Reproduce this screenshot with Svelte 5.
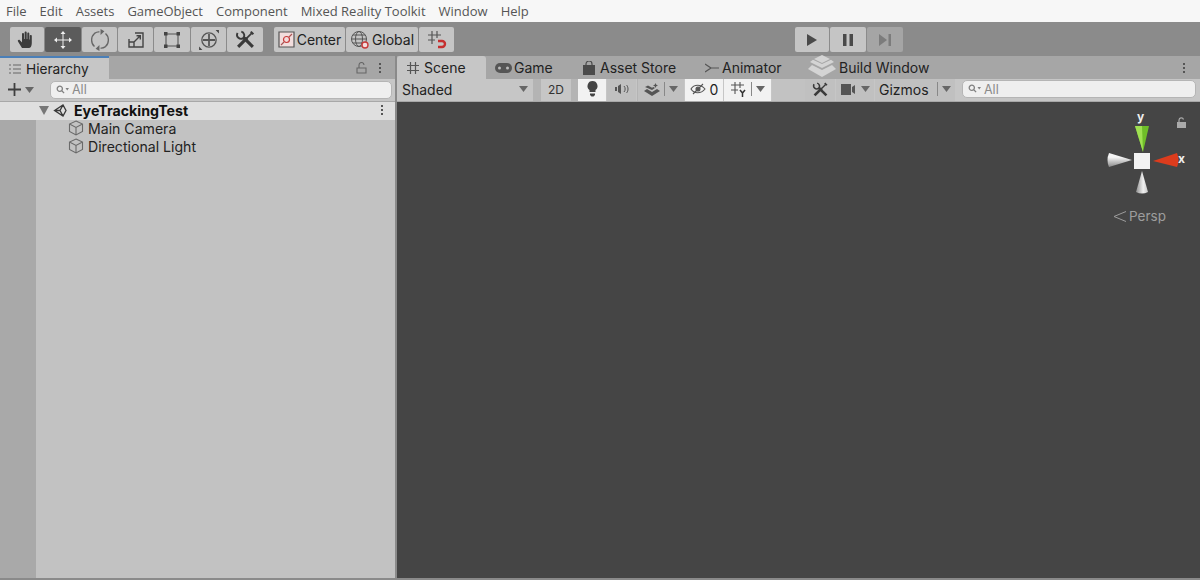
<script lang="ts">
  const menus = ["File", "Edit", "Assets", "GameObject", "Component", "Mixed Reality Toolkit", "Window", "Help"];
</script>

{#snippet caret()}
  <svg class="caret" width="9" height="6" viewBox="0 0 9 6"><path d="M0 0h9L4.500 6z" /></svg>
{/snippet}

{#snippet toolsIcon(size)}
  <svg width={size} height={size} viewBox="0 0 20 20" fill="none" stroke="#3a3a3a">
    <path d="M3 17l8.500-8.500" stroke-width="3" />
    <path d="M11 9l5-5" stroke-width="1.600" />
    <path d="M15 2.500l2.500 2.500" stroke-width="2" />
    <path d="M8 8l9 9" stroke-width="3" />
    <path d="M2.500 3.800a3.600 3.600 0 0 0 5.300 4.700 3.600 3.600 0 0 0-1.800-6" stroke-width="1.800" />
  </svg>
{/snippet}

{#snippet search(width)}
  <div class="search" style:width="{width}px">
    <svg width="13" height="10" viewBox="0 0 13 10" fill="none" stroke="#808080" stroke-width="1.300">
      <circle cx="3.800" cy="3.800" r="2.600" />
      <path d="M5.800 5.800l2.300 2.300" />
      <path d="M9.500 3H13L11.200 5.500z" fill="#808080" stroke="none" />
    </svg>
    <span>All</span>
  </div>
{/snippet}

<div class="screen">
  <nav class="menubar">
    {#each menus as item}
      <span>{item}</span>
    {/each}
  </nav>

  <div class="toolbar">
    <div class="group tools">
      <button class="tool" style="width:34px" aria-label="Hand">
        <svg width="22" height="22" viewBox="0 0 22 22" fill="#3c3c3c">
          <path d="M6 19 2 12.500c-.8-1.300 1-2.300 1.900-1.200L6 13.500V5c0-1.500 2-1.500 2 0v5h.6V3.500c0-1.500 2.100-1.500 2.100 0V10h.6V4.500c0-1.500 2-1.500 2 0V10.500h.5V7c0-1.400 2-1.400 2 0v7c0 3-1.200 5-3 5z" />
        </svg>
      </button>
      <button class="tool on" style="width:36px" aria-label="Move">
        <svg width="20" height="20" viewBox="0 0 20 20" fill="#eee" stroke="#eee" stroke-width="1">
          <path d="M10 4v12M4 10h12" />
          <path d="M10 1l2.500 3h-5zM10 19l2.500-3h-5zM1 10l3-2.500v5zM19 10l-3-2.500v5z" stroke="none" />
        </svg>
      </button>
      <button class="tool" style="width:35px" aria-label="Rotate">
        <svg width="22" height="22" viewBox="0 0 20 20" fill="none" stroke="#666" stroke-width="1.200">
          <path d="M5 16C1.500 13 1.500 7 5 4c1.500-1 3-1.500 4.500-1.300M15 4c3.500 3 3.500 9 0 12-1.500 1-3 1.500-4.500 1.300" />
          <path d="M10.500 0v5.500l3.500-3.500zM9.500 20v-5.500L6 18z" fill="#666" stroke="none" />
        </svg>
      </button>
      <button class="tool" style="width:35px" aria-label="Scale">
        <svg width="18" height="18" viewBox="0 0 18 18" fill="none" stroke="#444" stroke-width="1.400">
          <path d="M8 2h8v14H2V8" />
          <path d="M2 11h5v5M6.500 11.500 13 5M9.500 4.700H13.300V8.500" />
        </svg>
      </button>
      <button class="tool" style="width:36px" aria-label="Rect">
        <svg width="18" height="18" viewBox="0 0 18 18" fill="none" stroke="#555" stroke-width="1.100">
          <path d="M3 3h12v12H3z" />
          <path d="M1 1h3.500v3.500H1zM13.500 1H17v3.500h-3.500zM1 13.500h3.500V17H1zM13.500 13.500H17V17h-3.500z" fill="#444" stroke="none" />
        </svg>
      </button>
      <button class="tool" style="width:35px" aria-label="Transform">
        <svg width="22" height="22" viewBox="0 0 20 20" fill="none" stroke="#555" stroke-width="1.200">
          <circle cx="10" cy="10" r="6.500" />
          <path d="M10 4.500v11M4.500 10h11" stroke-width="1.600" />
          <path d="M16 1h3v3zM1 19v-3l3 3z" fill="#444" stroke="none" />
        </svg>
      </button>
      <button class="tool" style="width:36px" aria-label="Custom tools">{@render toolsIcon(21)}</button>
    </div>

    <div class="group pivot">
      <button class="tool text" style="width:71px">
        <svg width="17" height="17" viewBox="0 0 17 17" fill="#f2dddd" stroke="#555" stroke-width="1.200">
          <path d="M1 1h15v15H1z" />
          <circle cx="8.500" cy="8.500" r="3" fill="none" stroke="#c83a3a" />
          <path d="M3 14 6 11M11 6l3-3" stroke="#a55" fill="none" />
        </svg>
        Center
      </button>
      <button class="tool text" style="width:72px">
        <svg width="20" height="20" viewBox="0 0 20 20" fill="none" stroke="#555" stroke-width="1">
          <circle cx="9" cy="9" r="7.500" />
          <ellipse cx="9" cy="9" rx="3.500" ry="7.500" />
          <path d="M1.500 9h15M3 5h12M3 13h12" />
          <circle cx="15" cy="15" r="3" fill="#f4dcdc" stroke="#c83a3a" stroke-width="1.400" />
        </svg>
        Global
      </button>
      <button class="tool" style="width:35px" aria-label="Snap">
        <svg width="20" height="20" viewBox="0 0 20 20" fill="none" stroke="#555" stroke-width="1.200">
          <path d="M5 1v13M10 1v7M1 5h13M1 10h7" />
          <path d="M11 11h4a2.500 2.500 0 0 1 0 6h-4" stroke="#c62f2f" stroke-width="2.400" />
        </svg>
      </button>
    </div>

    <div class="group play">
      <button class="tool" style="width:34px" aria-label="Play">
        <svg width="12" height="12" viewBox="0 0 12 12" fill="#4a4a4a"><path d="M1 0l10 6-10 6z" /></svg>
      </button>
      <button class="tool" style="width:36px" aria-label="Pause">
        <svg width="10" height="12" viewBox="0 0 10 12" fill="#4a4a4a"><path d="M0 0h3.500v12H0zM6.500 0H10v12H6.500z" /></svg>
      </button>
      <button class="tool dim" style="width:36px" aria-label="Step">
        <svg width="12" height="12" viewBox="0 0 12 12" fill="#7c7c7c"><path d="M0 0l8 6-8 6zM9.500 0H12v12H9.500z" /></svg>
      </button>
    </div>
  </div>

  <div class="panes">
    <section class="hierarchy">
      <div class="tabs">
        <div class="tab active-blue">
          <svg width="12" height="10" viewBox="0 0 12 10" stroke="#666" stroke-width="1.200"><path d="M0 1h2M4 1h8M0 5h2M4 5h8M0 9h2M4 9h8" /></svg>
          Hierarchy
        </div>
        <div class="tab-actions">
          <svg width="11" height="12" viewBox="0 0 11 12" fill="none" stroke="#666" stroke-width="1.100"><path d="M1 6h9v5H1zM3 6V3a2.500 2.500 0 0 1 5 0" /></svg>
          <span class="dots"><i></i><i></i><i></i></span>
        </div>
      </div>
      <div class="search-row">
        <svg width="15" height="15" viewBox="0 0 15 15" stroke="#3f3f3f" stroke-width="1.800"><path d="M7.500 1v13M1 7.500h13" /></svg>
        {@render caret()}
        {@render search(342)}
      </div>
      <div class="scene-row">
        <svg class="arrow" width="10" height="9" viewBox="0 0 10 9"><path d="M0 0h10L5 9z" /></svg>
        <svg width="15" height="15" viewBox="0 0 15 15" fill="none" stroke="#3a3a3a" stroke-width="1.300">
          <path d="M1.500 7.500 10 2l3 5.500-3 5.500zM10 2 7 7.500l3 5.500M1.500 7.500H7" />
        </svg>
        <strong>EyeTrackingTest</strong>
        <span class="dots"><i></i><i></i><i></i></span>
      </div>
      <div class="tree">
        <div class="gutter"></div>
        <ul>
          {#each ["Main Camera", "Directional Light"] as name}
            <li>
              <svg width="16" height="16" viewBox="0 0 16 16" fill="none" stroke="#6a6a6a" stroke-width="1.100">
                <path d="M8 1l6.500 3v7.500L8 15l-6.500-3.500V4zM1.500 4 8 7.500 14.500 4M8 7.500V15" />
              </svg>
              {name}
            </li>
          {/each}
        </ul>
      </div>
    </section>

    <section class="scene">
      <div class="tabs">
        <div class="tab scene-tab">
          <svg width="12" height="12" viewBox="0 0 12 12" stroke="#555" stroke-width="1.200"><path d="M3.500 0v12M8.500 0v12M0 3.500h12M0 8.500h12" /></svg>
          Scene
        </div>
        <div class="tab plain game" style="width:88px">
          <svg width="17" height="10" viewBox="0 0 17 10"><rect width="17" height="10" rx="5" fill="#555" /><circle cx="4.500" cy="5" r="1.500" fill="#bbb" /><circle cx="12.500" cy="5" r="1.500" fill="#bbb" /></svg>
          Game
        </div>
        <div class="tab plain" style="width:122px">
          <svg width="12" height="14" viewBox="0 0 12 14" fill="#4a4a4a"><path d="M0 4h12v10H0z" /><path d="M3 5V3a3 3 0 0 1 6 0v2" fill="none" stroke="#4a4a4a" stroke-width="1.200" /></svg>
          Asset Store
        </div>
        <div class="tab plain animator" style="width:105px">
          <svg width="14" height="10" viewBox="0 0 14 10" fill="none" stroke="#555" stroke-width="1.200"><path d="M0 1 6 5 0 9M6 5h8" /></svg>
          Animator
        </div>
        <div class="tab plain build">
          <svg class="stack" width="28" height="24" viewBox="0 0 28 24" fill="#d4d4d4">
            <path d="M14 0l8 4-8 4-8-4zM14 9 5 4.800 2 7l12 6 12-6-3-2.200zM14 15 4 10 0 14l14 8 14-8-4-4z" />
          </svg>
          Build Window
        </div>
        <div class="tab-actions right"><span class="dots"><i></i><i></i><i></i></span></div>
      </div>

      <div class="scene-bar">
        <div class="cell drop" style="width:136px"><span>Shaded</span>{@render caret()}</div>
        <div class="cell gap" style="width:8px"></div>
        <div class="cell mid small flush" style="width:30px">2D</div>
        <div class="cell gap" style="width:7px"></div>
        <div class="cell mid lit" style="width:28px">
          <svg width="13" height="16" viewBox="0 0 13 16" fill="#444"><path d="M6.500 0a5 5 0 0 1 3 9v2h-6V9a5 5 0 0 1 3-9zM4 12.500h5V14l-1.500 1.500h-2L4 14z" /></svg>
        </div>
        <div class="cell mid" style="width:29px">
          <svg width="14" height="10" viewBox="0 0 14 10" fill="none" stroke="#555"><path d="M9 2c1.500 1.500 1.500 4.500 0 6M11.500 1c2 2 2 6 0 8" /><path d="M0 3h2v4H0zM3 2l3-2v10L3 8z" fill="#555" stroke="none" /></svg>
        </div>
        <div class="cell gap" style="width:1px"></div>
        <div class="cell mid split" style="width:46px">
          <svg width="16" height="13" viewBox="0 0 16 13" fill="#555"><path d="M0 8l3-2 5 3 5-3 3 2-8 5zM1 4l3-1.500 4 2.300 1.500-.8L11 5 8 7zM11.500 0l.8 1.700 1.700.8-1.700.8-.8 1.700-.8-1.700L9 2.500l1.700-.8z" /></svg>
          <i class="bar"></i>{@render caret()}
        </div>
        <div class="cell mid lit" style="width:38px">
          <svg width="16" height="12" viewBox="0 0 16 12" fill="none" stroke="#555" stroke-width="1.100"><path d="M1 6c3-5 10-5 14 0-4 5-11 5-14 0z" /><path d="M3 11 13 1" /><circle cx="8" cy="6" r="2" fill="#555" /></svg>
          <span>0</span>
        </div>
        <div class="cell mid lit split" style="width:47px">
          <svg width="16" height="15" viewBox="0 0 16 15" fill="none" stroke="#555" stroke-width="1.100"><path d="M4 0v12M9 0v6M0 3h13M0 8h7" /><path d="M9 8l2.500 3 2.500-3M11.500 11v4" stroke="#333" stroke-width="1.500" /></svg>
          <i class="bar"></i>{@render caret()}
        </div>
        <div class="cell gap wide" style="width:33px"></div>
        <div class="cell mid" style="width:30px">{@render toolsIcon(17)}</div>
        <div class="cell mid" style="width:38px">
          <svg width="16" height="11" viewBox="0 0 16 11" fill="#555"><path d="M0 0h10v11H0zM11 3l3-2v9l-3-2z" /></svg>
          {@render caret()}
        </div>
        <div class="cell mid split gizmos" style="width:80px">
          <span>Gizmos</span><i class="bar"></i>{@render caret()}
        </div>
        <div class="cell searchcell">{@render search(234)}</div>
      </div>

      <div class="canvas">
        <div class="gizmo">
          <svg width="90" height="90" viewBox="0 0 90 90">
            <defs>
              <linearGradient id="coneLeft" x1="0" y1="0" x2="0" y2="1">
                <stop offset="0.300" stop-color="#f4f4f4" />
                <stop offset="1" stop-color="#8a8a8a" />
              </linearGradient>
              <linearGradient id="coneDown" x1="0" y1="0" x2="1" y2="0">
                <stop offset="0" stop-color="#8f8f8f" />
                <stop offset="0.600" stop-color="#f0f0f0" />
                <stop offset="1" stop-color="#c8c8c8" />
              </linearGradient>
            </defs>
            <path d="M29 4h14l-6 26z" fill="#6fbd28" />
            <path d="M29 4h7l1 26z" fill="#9fe052" />
            <path d="M47 39 71 31q3 7 0 14z" fill="#dc3c1d" />
            <path d="M26 38 3 31q-3 7 0 14z" fill="url(#coneLeft)" />
            <path d="M36 49 30 70q6 3 12 0z" fill="url(#coneDown)" />
            <rect x="28" y="31" width="16" height="16" fill="#f2f2f2" />
          </svg>
          <span class="axis y">y</span>
          <span class="axis x">x</span>
        </div>
        <svg class="lock" width="9" height="11" viewBox="0 0 9 11" fill="#aaa"><path d="M0 5h9v6H0z" /><path d="M2 5V3a2.300 2.300 0 0 1 4.500-.5" fill="none" stroke="#aaa" stroke-width="1.200" /></svg>
        <div class="persp">
          <svg width="13" height="11" viewBox="0 0 13 11" fill="none" stroke="#9d9d9d"><path d="M13 .5 1 5.500l12 5" /></svg>
          Persp
        </div>
      </div>
    </section>
  </div>
</div>

<style>
  :global(body) {
    margin: 0;
    background: #8a8a8a;
  }

  .screen {
    width: 1200px;
    height: 580px;
    overflow: hidden;
    display: flex;
    flex-direction: column;
    font-family: Inter, "Noto Sans", sans-serif;
    font-size: 14px;
    color: #1f1f1f;
    background: #8a8a8a;
  }

  .menubar {
    height: 22px;
    box-sizing: border-box;
    padding: 0 0 1px 6px;
    display: flex;
    align-items: center;
    gap: 13px;
    background: #f7f7f7;
    font-family: "Open Sans", "Noto Sans", sans-serif;
    font-size: 13px;
    color: #555;
  }

  .toolbar {
    height: 34px;
    flex: none;
    box-sizing: border-box;
    padding: 5px 0 4px 10px;
    display: flex;
    background: #8b8b8b;
  }

  .group {
    display: flex;
    gap: 1px;
  }

  .pivot {
    margin-left: 11px;
  }

  .play {
    margin-left: 341px;
  }

  .tool {
    height: 25px;
    padding: 0;
    border: 0;
    border-radius: 2px;
    background: #c5c5c5;
    display: flex;
    align-items: center;
    justify-content: center;
    gap: 2px;
    font: inherit;
    color: #222;
  }

  .tool.on {
    background: #5b5b5b;
  }

  .tool.dim {
    background: #a5a5a5;
  }

  .panes {
    height: 522px;
    display: flex;
    gap: 2px;
  }

  .hierarchy {
    width: 395px;
    flex: none;
    display: flex;
    flex-direction: column;
  }

  .scene {
    flex: 1;
    display: flex;
    flex-direction: column;
  }

  .tabs {
    height: 23px;
    flex: none;
    display: flex;
    background: #a6a6a6;
  }

  .tab {
    height: 100%;
    box-sizing: border-box;
    display: flex;
    align-items: center;
    gap: 5px;
    background: #c6c6c6;
    color: #222;
  }

  .active-blue {
    width: 109px;
    padding-left: 9px;
    border-top: 2px solid #4a7fb8;
    font-size: 13.700px;
  }

  .scene-tab {
    width: 89px;
    padding-left: 10px;
    border-radius: 3px 3px 0 0;
  }

  .tab.plain {
    background: none;
    padding-left: 9px;
  }

  .tab.game {
    gap: 2px;
  }

  .tab.animator {
    gap: 3px;
  }

  .tab.build {
    padding-left: 7px;
    gap: 3px;
  }

  .stack {
    margin-top: -1px;
  }

  .tab-actions {
    margin-left: auto;
    padding-right: 14px;
    display: flex;
    align-items: center;
    gap: 12px;
  }

  .tab-actions.right {
    padding-right: 15px;
  }

  .dots {
    display: inline-flex;
    flex-direction: column;
    gap: 2px;
  }

  .dots i {
    width: 2px;
    height: 2px;
    background: #555;
  }

  .search-row {
    height: 23px;
    flex: none;
    box-sizing: border-box;
    padding: 0 3px 1px 7px;
    display: flex;
    align-items: center;
    gap: 3px;
    background: #c6c6c6;
    border-bottom: 1px solid #a8a8a8;
  }

  .search-row .search {
    margin-left: auto;
  }

  .caret {
    fill: #666;
    flex: none;
  }

  .search {
    height: 18px;
    box-sizing: border-box;
    padding-left: 5px;
    display: flex;
    align-items: center;
    gap: 3px;
    background: #efefef;
    border: 1px solid #b5b5b5;
    border-radius: 5px;
    font-size: 12.500px;
    color: #8a8a8a;
  }

  .scene-row {
    height: 18px;
    flex: none;
    box-sizing: border-box;
    padding: 0 12px 2px 39px;
    display: flex;
    align-items: center;
    gap: 3px;
    background: #dfdfdf;
    color: #111;
  }

  .scene-row strong {
    margin-left: 3px;
    font-weight: 700;
    font-size: 14.200px;
  }

  .scene-row .dots {
    margin-left: auto;
  }

  .arrow {
    fill: #777;
    margin-right: 1px;
  }

  .tree {
    flex: 1;
    display: flex;
    background: #c2c2c2;
  }

  .gutter {
    width: 36px;
    background: #a9a9a9;
  }

  .tree ul {
    margin: 0;
    padding: 0 0 0 32px;
    list-style: none;
  }

  .tree li {
    height: 18px;
    box-sizing: border-box;
    padding-bottom: 2px;
    display: flex;
    align-items: center;
    gap: 4px;
    white-space: nowrap;
    font-size: 14.100px;
    color: #222;
  }

  .scene-bar {
    height: 23px;
    flex: none;
    box-sizing: border-box;
    display: flex;
    background: #c6c6c6;
    border-bottom: 1px solid #a8a8a8;
  }

  .cell {
    height: 100%;
    box-sizing: border-box;
    padding-bottom: 2px;
    flex: none;
    display: flex;
    align-items: center;
    background: #c6c6c6;
  }

  .cell.drop {
    padding: 0 5px 2px;
    justify-content: space-between;
    color: #222;
  }

  .cell.gap {
    background: #b4b4b4;
  }

  .cell.gap.wide {
    background: #c2c2c2;
  }

  .cell.mid {
    justify-content: center;
    gap: 4px;
    background: #c0c0c0;
    margin-right: 1px;
  }

  .cell.mid.flush {
    margin-right: 0;
    background: #c6c6c6;
  }

  .cell.small {
    font-size: 12px;
    color: #333;
  }

  .cell.mid.lit {
    background: #f2f2f2;
  }

  .cell.mid.gizmos {
    justify-content: flex-start;
    padding-left: 4px;
    gap: 4px;
    color: #222;
  }

  .gizmos .bar {
    margin-left: 4px;
  }

  .bar {
    width: 1px;
    height: 14px;
    background: #888;
  }

  .searchcell {
    flex: 1;
    padding-left: 6px;
  }

  .canvas {
    position: relative;
    flex: 1;
    background: #454545;
  }

  .gizmo {
    position: absolute;
    left: 709px;
    top: 20px;
    width: 90px;
    height: 90px;
  }

  .axis {
    position: absolute;
    font-family: Inter, sans-serif;
    font-weight: 700;
    font-size: 12px;
    color: #eee;
  }

  .axis.y {
    left: 31px;
    top: -13px;
  }

  .axis.x {
    left: 72px;
    top: 29px;
  }

  .lock {
    position: absolute;
    left: 780px;
    top: 15px;
  }

  .persp {
    position: absolute;
    left: 716px;
    top: 106px;
    display: flex;
    align-items: center;
    gap: 3px;
    font-size: 13.500px;
    color: #9d9d9d;
  }
</style>
